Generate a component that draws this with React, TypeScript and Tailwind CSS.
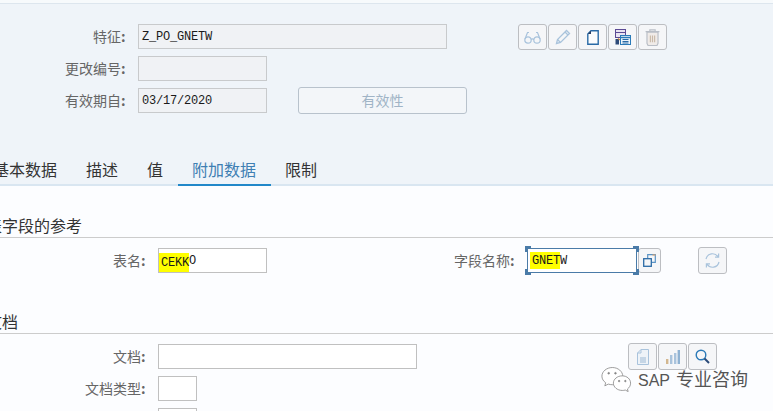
import React from "react";

const CJK = "font-['Noto_Sans_CJK_SC','Liberation_Sans',sans-serif]";
const MONO = "font-['Liberation_Mono','Noto_Sans_CJK_SC',monospace] text-[12px] tracking-[-0.2px] text-[#1a1a1a]";

function Label({ w, text, ml = "" }: { w: string; text: string; ml?: string }) {
  return (
    <div className={`${w} ${ml} shrink-0 whitespace-nowrap text-right text-[14px] leading-[25px] text-[#666666] ${CJK}`}>
      {text}
      <span className="inline-block w-[6px] text-left font-bold">:</span>
    </div>
  );
}

function IconBtn({ children, cls = "w-[29px] h-[26px]" }: { children: React.ReactNode; cls?: string }) {
  return (
    <div className={`${cls} shrink-0 flex items-center justify-center rounded-[3px] border border-[#bcbec2] bg-[#f5f6f8]`}>
      {children}
    </div>
  );
}

const Glasses = () => (
  <svg width="17" height="15" viewBox="0 0 17 15" fill="none" stroke="#a9c3dc" strokeWidth="1.2">
    <circle cx="4" cy="10" r="3.2" />
    <circle cx="13" cy="10" r="3.2" />
    <path d="M7 9.500c1-.8 2-.8 3 0M1 9 3.500 2.500H5M16 9 13.500 2.500H12" />
  </svg>
);
const Pencil = () => (
  <svg width="16" height="16" viewBox="0 0 16 16" fill="none" stroke="#a9c3dc" strokeWidth="1.3">
    <path d="M1.500 14.500 2.500 10.500 11.500 1.500 14.500 4.500 5.500 13.500Z" />
    <path d="M2.500 10.500 5.500 13.500M10 3l3 3" />
  </svg>
);
const Page = () => (
  <svg width="12" height="15" viewBox="0 0 12 15" fill="none">
    <path d="M4 .7H11.200V14.300H.8V4Z" stroke="#2a6aa6" strokeWidth="1.4" fill="#fbfcfd" />
    <path d="M.8 4 4 .7V4Z" fill="#2a3f66" />
  </svg>
);
const CopyList = () => (
  <svg width="16" height="16" viewBox="0 0 16 16" fill="none">
    <rect x=".5" y=".5" width="10" height="8" fill="#e9e4f2" stroke="#5b4a94" />
    <path d="M.5 3.500h10" stroke="#5b4a94" />
    <rect x=".5" y="10" width="3.500" height="5.500" fill="#2e4a78" />
    <path d="M3 9.500 5 11" stroke="#c98a3a" strokeWidth="1.200" />
    <rect x="5.500" y="6.500" width="10" height="9" fill="#eaf3fa" stroke="#2a7ab8" />
    <path d="M5.500 8.500h10" stroke="#2a7ab8" strokeWidth="1.500" />
    <path d="M7.500 10.500h6M7.500 12.500h6M7.500 14h6" stroke="#2a6aa6" />
  </svg>
);
const Trash = () => (
  <svg width="15" height="17" viewBox="0 0 14 16" fill="none" stroke="#b9bec6" strokeWidth="1.1">
    <path d="M.5 2.500h13M4.500 2.500V.8h5v1.700" />
    <path d="M1.800 3v10.500l1 2h8.400l1-2V3Z" fill="#f0ebe8" />
    <path d="M5 6v6.500M7 6v6.500M9 6v6.500" stroke="#c9b9a8" />
  </svg>
);
const Popup = () => (
  <svg width="13" height="13" viewBox="0 0 13 13" fill="none">
    <rect x=".7" y="4.700" width="7.600" height="7.600" stroke="#2a6aa6" strokeWidth="1.300" />
    <path d="M4.700 4V.7h7.600v7.600H9" stroke="#5a93c4" strokeWidth="1.200" />
    <path d="M9.500 1h3" stroke="#e8a060" />
  </svg>
);
const Refresh = () => (
  <svg width="17" height="17" viewBox="0 0 17 17" fill="none" stroke="#a9c3dc" strokeWidth="1.200">
    <path d="M2 7a6.600 6.600 0 0 1 12-2.200M15 10a6.600 6.600 0 0 1-12 2.200" />
    <path d="M14.600 1.500v3.600H11M2.400 15.500v-3.600H6" />
  </svg>
);
const DocIcon = () => (
  <svg width="12" height="16" viewBox="0 0 12 16" fill="none" stroke="#a9c3dc">
    <path d="M4 .5h7.500v15H.5V4Z" fill="#eef3f8" />
    <path d="M.5 4H4V.5" />
    <path d="M3 9h6M3 11h6M3 13h6" stroke="#9db9d4" />
  </svg>
);
const Bars = () => (
  <svg width="14" height="14" viewBox="0 0 14 14">
    <rect x="0" y="9" width="2.400" height="5" fill="#d3b78f" />
    <rect x="4" y="5" width="2.400" height="9" fill="#a9c3dc" />
    <rect x="8" y="3" width="2.400" height="11" fill="#a9c3dc" />
    <rect x="11.600" y="0" width="2.400" height="14" fill="#8fb2d2" />
  </svg>
);
const Search = () => (
  <svg width="15" height="15" viewBox="0 0 15 15" fill="none">
    <circle cx="6" cy="6" r="4.800" stroke="#2a7ab8" strokeWidth="1.400" />
    <path d="M9.500 9.500 14 14" stroke="#2a4a78" strokeWidth="2" />
  </svg>
);
const WeChat = () => (
  <svg width="31" height="25" viewBox="0.5 0.5 29 24" fill="#ffffff" stroke="#8a8a8a" strokeWidth="0.8">
    <path d="M11 1C5.500 1 1 4.800 1 9.300c0 2.600 1.400 4.800 3.600 6.300L3.800 18.600l3.300-1.700c1.200.4 2.500.6 3.900.6 6 0 10-4 10-8.200C21 4.800 16.500 1 11 1Z" />
    <path d="M20.500 9C15.800 9 12 12.200 12 16s3.800 7 8.500 7c1 0 2-.1 2.900-.4l2.800 1.500-.7-2.500c1.900-1.300 3-3.300 3-5.600C28.500 12.200 25.200 9 20.500 9Z" />
    <circle cx="7.500" cy="6.500" r=".8" fill="#777777" />
    <circle cx="14" cy="6.500" r=".8" fill="#777777" />
    <circle cx="17.500" cy="14" r=".7" fill="#777777" />
    <circle cx="23.500" cy="14" r=".7" fill="#777777" />
  </svg>
);

const Corner = ({ cls }: { cls: string }) => <span className={`absolute h-[6px] w-[6px] border-[#4a7ba8] ${cls}`} />;

const tabs = ["基本数据", "描述", "值", "附加数据", "限制"];

export default function App() {
  return (
    <div className={`relative h-[411px] w-[773px] overflow-hidden bg-[#fcfdff] ${CJK}`}>
      <div className="h-[186px] bg-[#eff4f9]">
        <div className="h-[4px] border-b border-[#dde6ee] bg-[#f7fafc]" />
        <div className="flex flex-col gap-[7px] pt-[20px]">
          <div className="flex h-[25px] items-start">
            <Label w="w-[127px]" text="特征" />
            <div className={`ml-[11px] flex h-[25px] w-[309px] items-center border border-[#c8cacc] bg-[#f0f2f5] pl-[3px] ${MONO}`}>Z_PO_GNETW</div>
            <div className="ml-[71px] flex gap-px">
              <IconBtn><Glasses /></IconBtn>
              <IconBtn><Pencil /></IconBtn>
              <IconBtn><Page /></IconBtn>
              <IconBtn><CopyList /></IconBtn>
              <IconBtn><Trash /></IconBtn>
            </div>
          </div>
          <div className="flex h-[25px] items-start">
            <Label w="w-[127px]" text="更改编号" />
            <div className="ml-[11px] h-[25px] w-[129px] border border-[#c8cacc] bg-[#f0f2f5]" />
          </div>
          <div className="flex h-[25px] items-center">
            <Label w="w-[127px]" text="有效期自" />
            <div className={`ml-[11px] flex h-[25px] w-[129px] items-center border border-[#c8cacc] bg-[#f0f2f5] pl-[3px] ${MONO}`}>03/17/2020</div>
            <div className="ml-[31px] flex h-[27px] w-[169px] items-center justify-center rounded-[3px] border border-[#b8c2cc] bg-[#f3f6f9] text-[14px] text-[#a0b4c6]">有效性</div>
          </div>
        </div>
        <div className="ml-[-21.5px] mt-[42px] flex h-[31px]">
          {tabs.map((t) => (
            <div
              key={t}
              className={`flex h-[31px] items-center border-b-2 px-[14.5px] pb-[2px] text-[16px] ${
                t === "附加数据" ? "border-[#2188c9] text-[#3f7fb3]" : "border-[#d9e6f1] text-[#333333]"
              }`}
            >
              {t}
            </div>
          ))}
          <div className="flex-1 border-b-2 border-[#d9e6f1]" />
        </div>
      </div>

      <div className="ml-[-14px] mt-[28px] h-[24px] border-b border-[#cccccc] text-[16px] leading-[23px] text-[#333333]">表字段的参考</div>
      <div className="mt-[10px] flex h-[25px] items-center">
        <Label w="w-[147px]" text="表名" />
        <div className={`ml-[11px] flex h-[25px] w-[109px] items-center border border-[#c0c0c0] bg-white ${MONO}`}>
          <span className="flex h-[19px] items-center self-end bg-[#ffff00] pl-[2px]">CEKK</span>O
        </div>
        <Label w="w-[62px]" ml="ml-[187px]" text="字段名称" />
        <div className={`relative ml-[11px] flex h-[25px] w-[110px] items-center border border-[#4a7ba8] bg-white pl-[2px] ${MONO}`}>
          <span className="flex h-[17px] items-center bg-[#ffff00] pl-[2px]">GNET</span>W
          <Corner cls="-left-[3px] -top-[3px] border-l-2 border-t-2" />
          <Corner cls="-right-[3px] -top-[3px] border-r-2 border-t-2" />
          <Corner cls="-left-[3px] -bottom-[3px] border-l-2 border-b-2" />
          <Corner cls="-right-[3px] -bottom-[3px] border-r-2 border-b-2" />
        </div>
        <IconBtn cls="ml-px h-[25px] w-[23px]"><Popup /></IconBtn>
        <div className="ml-[37px]"><IconBtn cls="h-[27px] w-[29px]"><Refresh /></IconBtn></div>
      </div>

      <div className="ml-[-14px] mt-[37px] h-[24px] border-b border-[#cccccc] text-[16px] leading-[23px] text-[#333333]">文档</div>
      <div className="mt-[10px] flex flex-col gap-[7px]">
        <div className="flex h-[25px] items-center">
          <Label w="w-[147px]" text="文档" />
          <div className="ml-[11px] h-[25px] w-[259px] border border-[#c0c0c0] bg-white" />
          <div className="ml-[211px] flex gap-px">
            <IconBtn cls="h-[27px] w-[29px]"><DocIcon /></IconBtn>
            <IconBtn cls="h-[27px] w-[29px]"><Bars /></IconBtn>
            <IconBtn cls="h-[27px] w-[29px]"><Search /></IconBtn>
          </div>
        </div>
        <div className="flex h-[25px] items-center">
          <Label w="w-[147px]" text="文档类型" />
          <div className="ml-[11px] h-[25px] w-[39px] border border-[#c0c0c0] bg-white" />
        </div>
        <div className="flex h-[25px] items-center">
          <div className="ml-[158px] h-[25px] w-[39px] border border-[#c0c0c0] bg-white" />
        </div>
      </div>

      <div className="absolute left-[601px] top-[365px] flex items-center gap-[6px]">
        <WeChat />
        <span className="text-[18px] leading-[26px] text-[#555555]">
          <span className="mr-[6px] font-['Liberation_Sans'] text-[16px]">SAP</span>专业咨询
        </span>
      </div>
    </div>
  );
}
